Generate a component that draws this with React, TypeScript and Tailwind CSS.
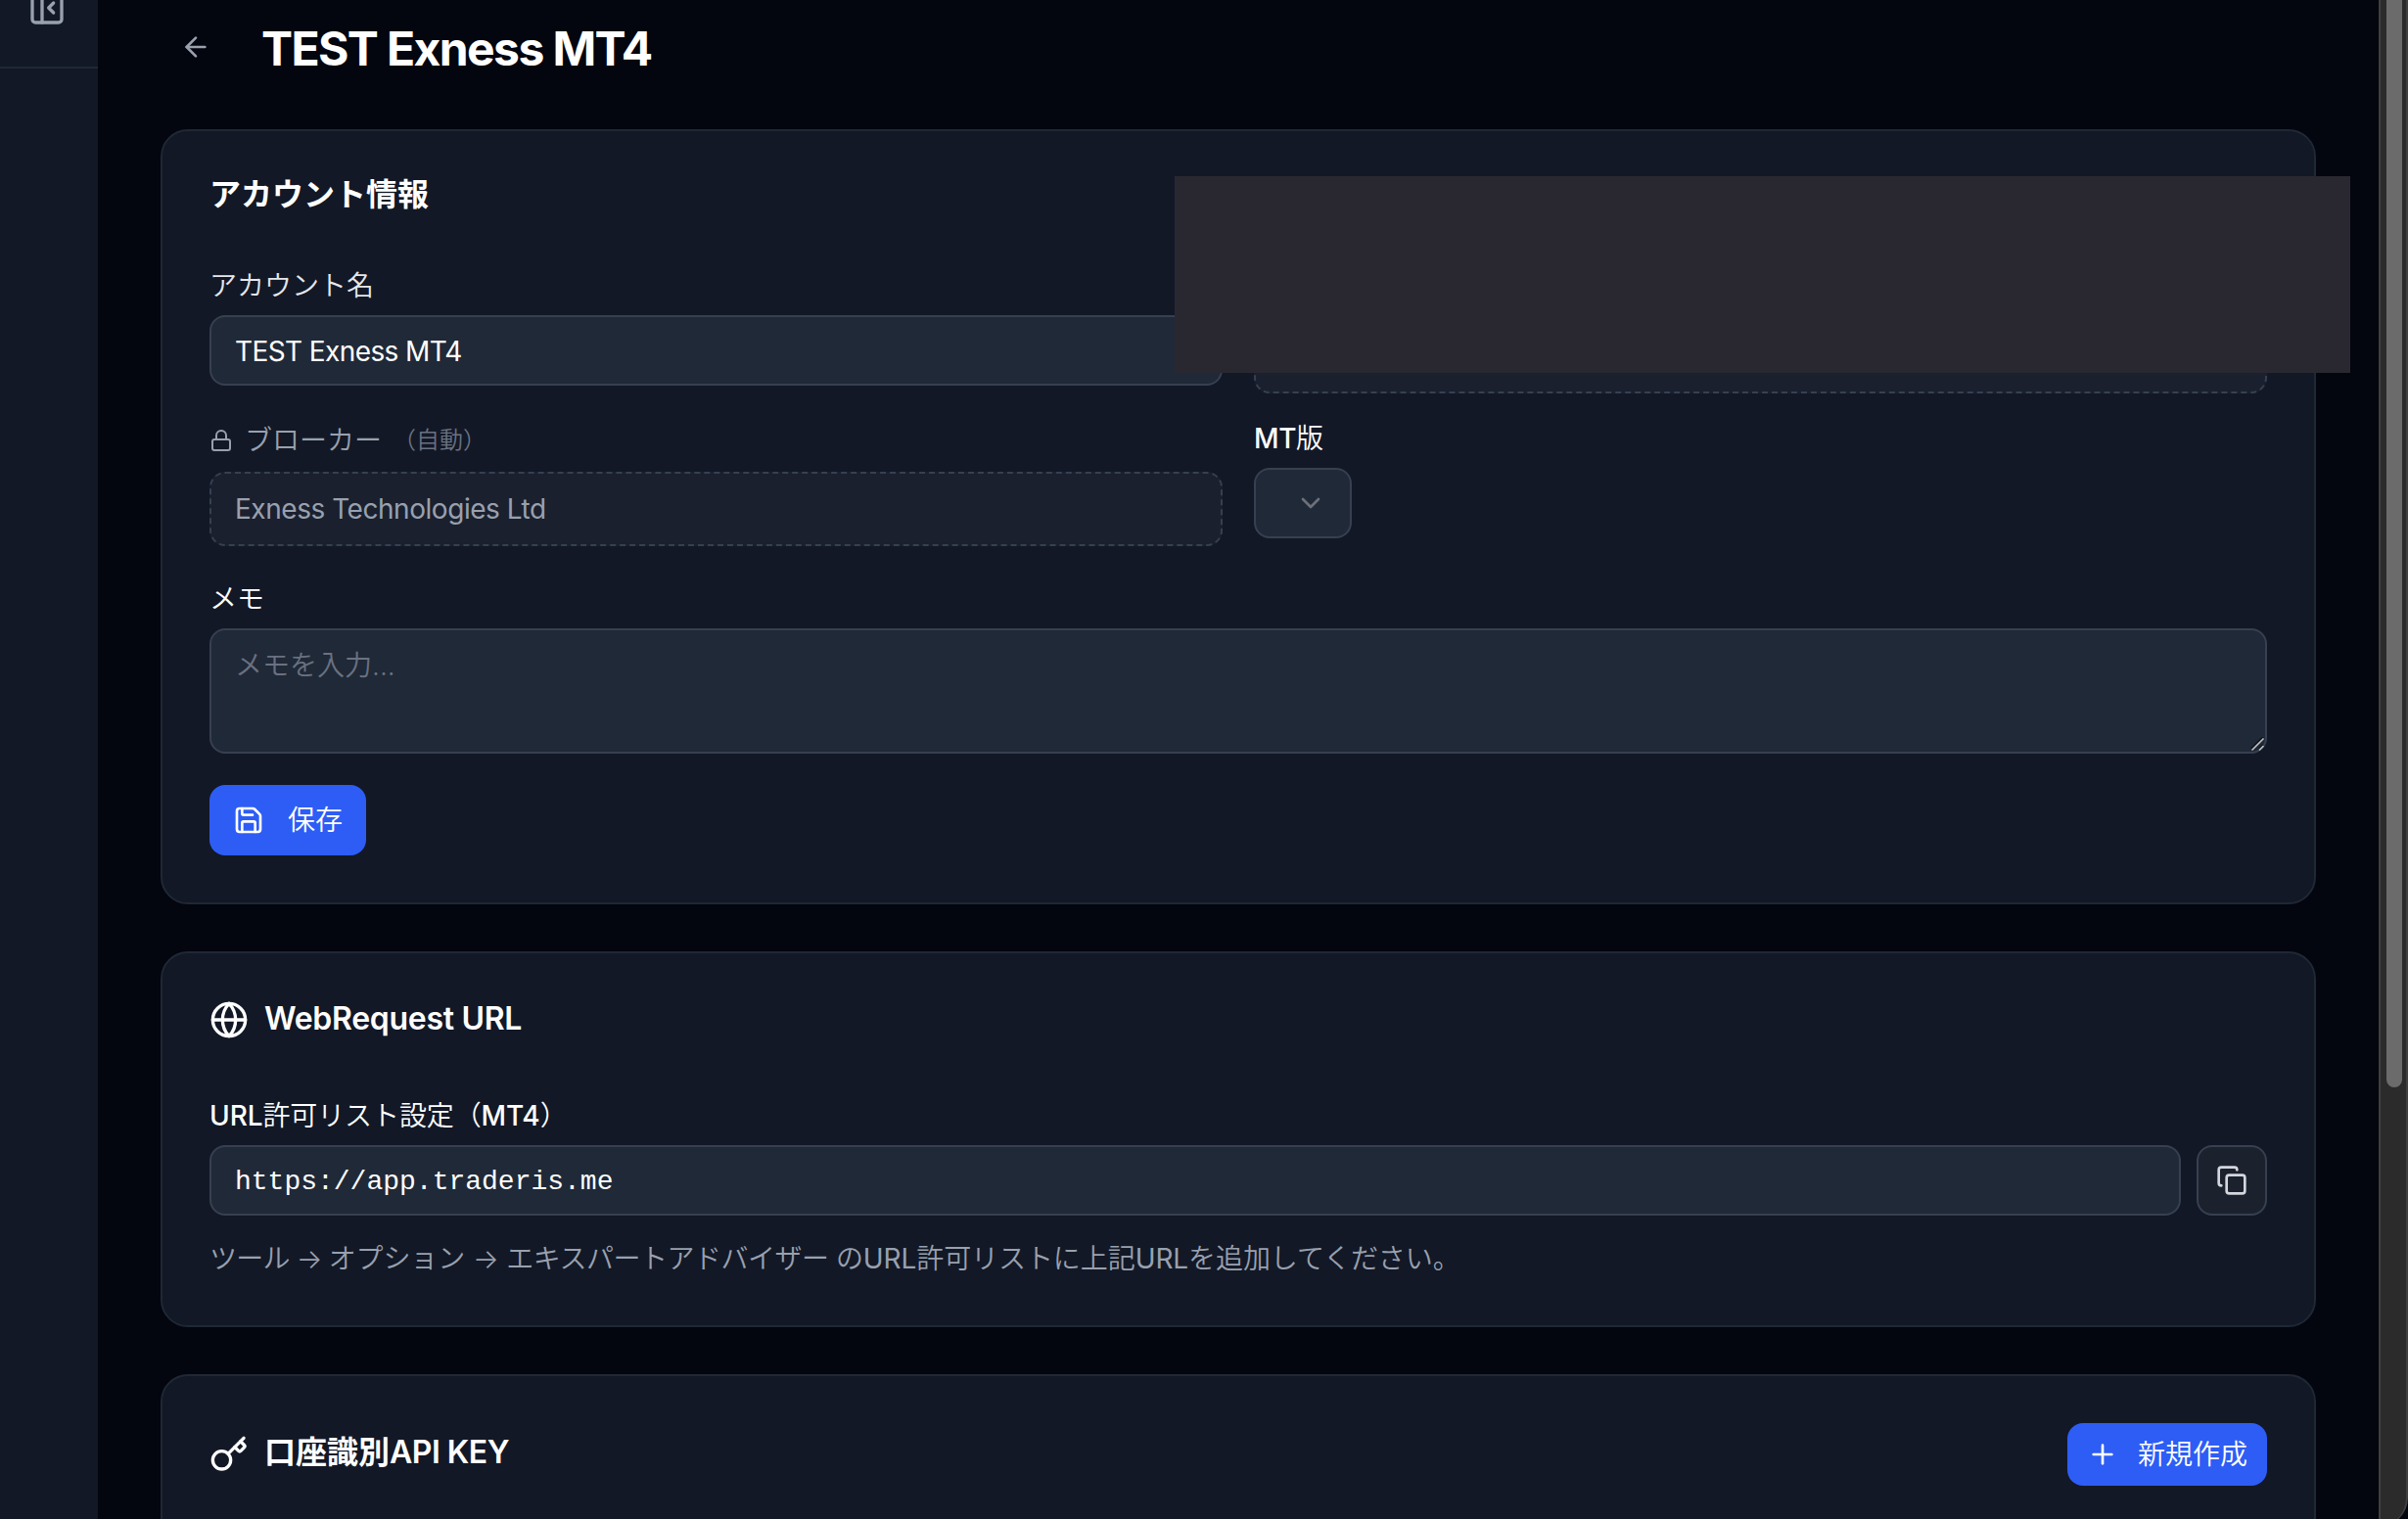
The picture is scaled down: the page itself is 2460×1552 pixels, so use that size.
import React, { useState } from 'react';
import { ArrowLeft, ChevronDown, Copy, Globe, Key, Lock, PanelLeftClose, Plus, Save } from 'lucide-react';

const WEBREQUEST_URL = 'https://app.traderis.me';

const Card: React.FC<{ className?: string; children: React.ReactNode }> = ({ className = '', children }) => (
  <section className={`shrink-0 rounded-[28px] border-2 border-[#1f2835] bg-[#121826] p-12 ${className}`}>
    {children}
  </section>
);

const App: React.FC = () => {
  const [accountName, setAccountName] = useState('TEST Exness MT4');
  const [memo, setMemo] = useState('');

  return (
    <div className="relative flex h-[1552px] w-[2460px] overflow-hidden bg-[#03050f] font-['Inter','Noto_Sans_CJK_JP',sans-serif] text-[28px] leading-10 text-white">
      {/* Sidebar */}
      <aside className="w-[100px] shrink-0 bg-[#121826]">
        <div className="flex h-[70px] items-start border-b-2 border-[#1f2835] pl-7">
          <PanelLeftClose className="-mt-3 text-[#99a0ae]" size={40} />
        </div>
      </aside>

      <main className="flex min-w-0 flex-1 flex-col pr-16 pl-16">
        {/* Header */}
        <header className="flex h-[132px] shrink-0 items-start pt-4 pl-5">
          <button className="flex h-16 w-8 items-center">
            <ArrowLeft className="text-[#99a0ae]" size={32} />
          </button>
          <h1 className="ml-[51px] text-[48px] leading-[67px] font-bold tracking-[-1.6px]">TEST Exness MT4</h1>
        </header>

        <div className="flex flex-col gap-12">
          {/* Account info */}
          <Card className="h-[792px]">
            <h2 className="h-8 text-[32px] leading-[34px] font-semibold">アカウント情報</h2>

            <div className="mt-[56px] grid grid-cols-2 gap-x-8">
              <div className="h-[160px]">
                <label className="block h-[52px] pt-0.5 font-[350] text-[#e5e7eb]">アカウント名</label>
                <input
                  value={accountName}
                  onChange={(e) => setAccountName(e.target.value)}
                  className="h-[72px] w-full rounded-[16px] border-2 border-[#374050] bg-[#202937] px-6 pt-0.5 tracking-[-0.6px] focus:outline-none"
                />
              </div>
              <div className="pt-[56px]">
                <div className="h-[76px] rounded-[16px] border-2 border-dashed border-[#374050] bg-[#1a202e]" />
              </div>

              <div className="h-[160px]">
                <label className="flex h-[52px] items-start font-[350] text-[#99a0ae]">
                  <Lock className="mt-2 mr-3" size={24} />
                  ブローカー
                  <span className="ml-[11px] text-[24px] text-[#6a7181]">（自動）</span>
                </label>
                <div className="flex h-[76px] items-center rounded-[16px] border-2 border-dashed border-[#374050] bg-[#1a202e] px-6 tracking-[-0.46px] text-[#99a0ae]">
                  Exness Technologies Ltd
                </div>
              </div>
              <div>
                <label className="block h-[48px] leading-9 font-medium">
                  <span className="tracking-[-0.4px]">MT</span>
                  <span className="font-[350]">版</span>
                </label>
                <button className="flex h-[72px] w-[100px] items-center justify-end rounded-[16px] border-2 border-[#374050] bg-[#202937] px-6">
                  <ChevronDown className="text-[#6b7079]" size={32} />
                </button>
              </div>
            </div>

            <label className="block h-[52px] pt-0.5 font-[350]">メモ</label>
            <div className="relative h-[128px]">
              <textarea
                value={memo}
                onChange={(e) => setMemo(e.target.value)}
                placeholder="メモを入力..."
                className="block h-[128px] w-full resize-none rounded-[16px] border-2 border-[#374050] bg-[#202937] px-6 py-4 font-[350] placeholder:text-[#6a7181] focus:outline-none"
              />
              <svg className="absolute right-px bottom-px" width="16" height="16" viewBox="0 0 16 16" fill="none">
                <path d="M1 12 13 0M9 12 13 8" stroke="#10141c" strokeWidth="2" />
                <path d="M1.5 13.5 13.5 1.5M9 13.5 13.5 9" stroke="#bfc1c4" strokeWidth="1.6" />
              </svg>
            </div>

            <button className="mt-8 flex h-[72px] items-center gap-6 rounded-[16px] bg-[#2d5df5] px-6 font-[350]">
              <Save size={32} />
              保存
            </button>
          </Card>

          {/* WebRequest URL */}
          <Card className="h-[384px]">
            <div className="flex h-10 gap-4">
              <Globe size={40} />
              <h2 className="text-[32px] leading-[38px] font-semibold tracking-[-0.3px]">WebRequest URL</h2>
            </div>
            <label className="mt-[58px] block h-[50px] font-medium tracking-[-0.1px]">
              URL<span className="font-[350]">許可リスト設定（</span>MT4<span className="font-[350]">）</span>
            </label>
            <div className="flex gap-4">
              <input
                readOnly
                value={WEBREQUEST_URL}
                className="h-[72px] min-w-0 flex-1 rounded-[16px] border-2 border-[#374050] bg-[#202937] px-6 pt-0.5 font-['Liberation_Mono',monospace] focus:outline-none"
              />
              <button className="flex size-[72px] items-center justify-center rounded-[16px] border-2 border-[#374050] bg-[#1c212e]">
                <Copy className="text-[#d3d6dc]" size={32} />
              </button>
            </div>
            <p className="mt-6 font-[350] text-[#99a0ae]">
              <span className="tracking-[-0.8px]">ツール → </span>
              <span className="tracking-[-0.1px]">オプション → </span>
              <span className="tracking-[-0.5px]">エキスパートアドバイザー </span>
              <span className="tracking-[-0.08px]">
                の<span className="font-normal">URL</span>許可リストに上記<span className="font-normal">URL</span>を追加してください。
              </span>
            </p>
          </Card>

          {/* API key */}
          <Card className="h-[384px]">
            <div className="flex h-16 items-center justify-between">
              <div className="flex items-center gap-4">
                <Key size={40} />
                <h2 className="-mt-1 text-[32px] font-semibold">
                  口座識別<span className="tracking-[-0.5px]">API KEY</span>
                </h2>
              </div>
              <button className="flex h-16 items-center gap-5 rounded-[16px] bg-[#2d5df5] px-5 font-[350]">
                <Plus size={32} />
                新規作成
              </button>
            </div>
          </Card>
        </div>
      </main>

      {/* Scrollbar */}
      <div className="h-[1560px] w-[30px] shrink-0 rounded-br-[30px] border-x-2 border-[#404040] bg-[#2b2b2b] pl-1.5">
        <div className="h-[1111px] w-4 rounded-b-full bg-[#6b6b6b]" />
      </div>

      {/* Redacted area */}
      <div className="absolute top-[180px] left-[1200px] h-[201px] w-[1201px] bg-[#292830]" />
    </div>
  );
};

export default App;
